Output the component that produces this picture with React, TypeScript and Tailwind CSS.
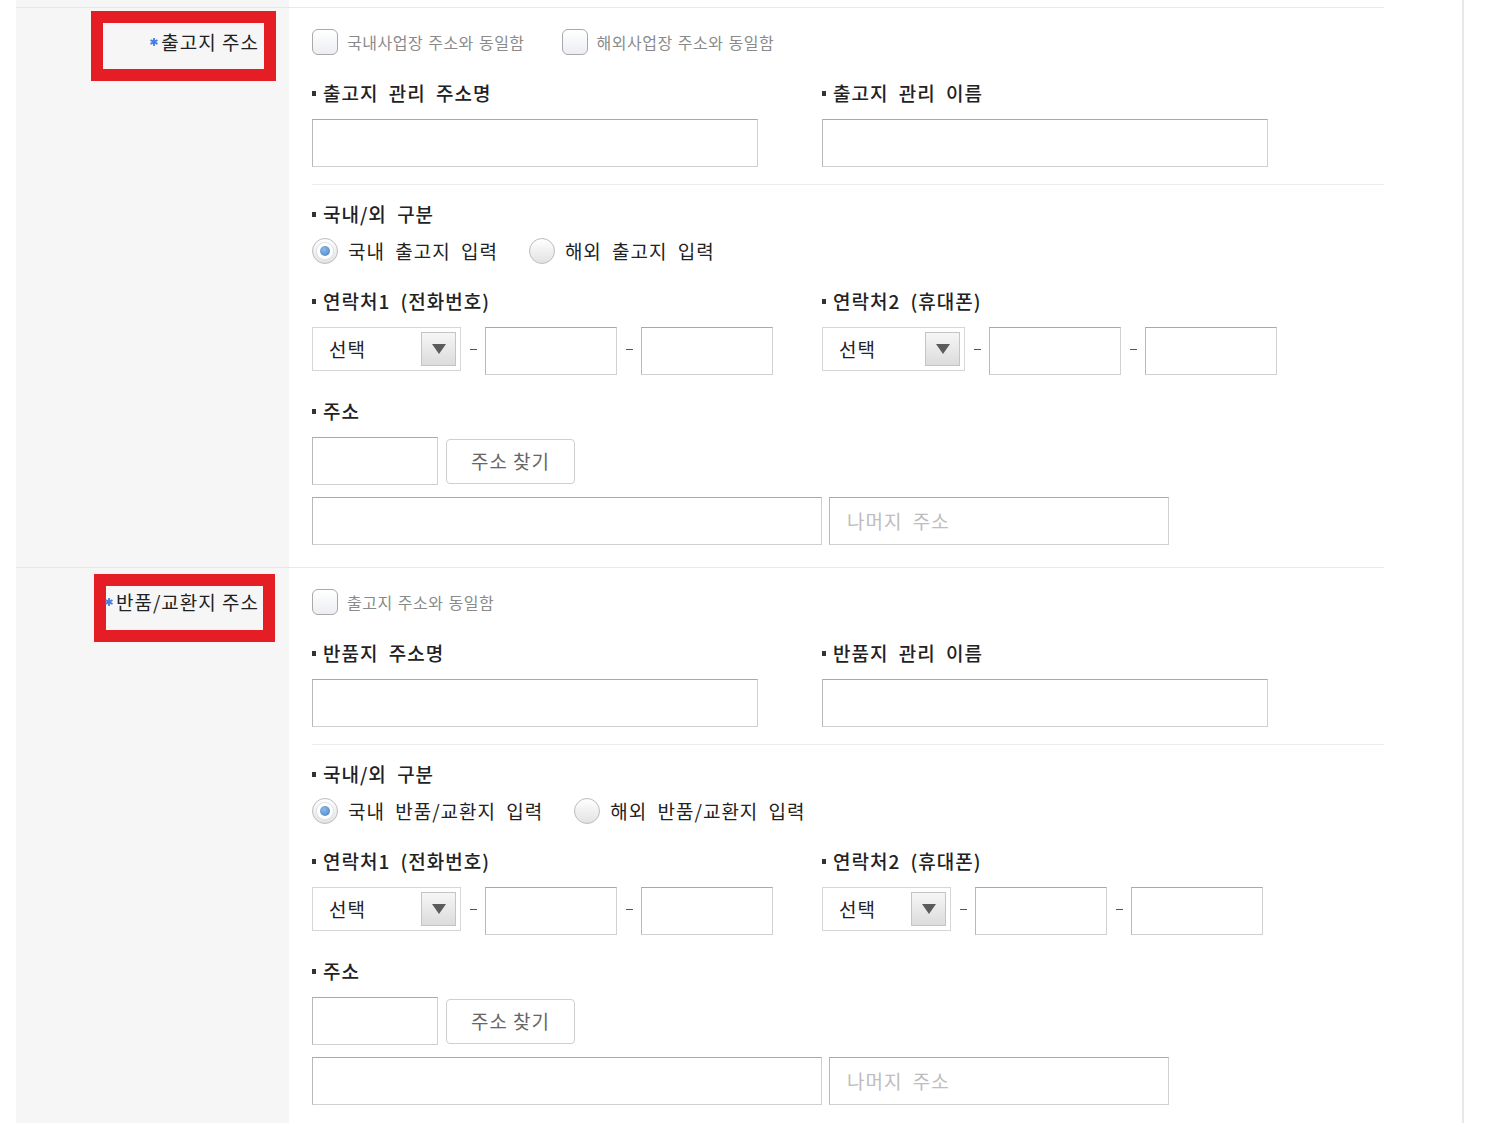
import React from "react";

const FONT = { fontFamily: '"Noto Sans CJK KR", "Noto Sans", sans-serif' };

function Star() {
  return (
    <svg width="8" height="8" viewBox="0 0 10 10" className="mr-[3px] shrink-0">
      <g stroke="#4a7fe0" strokeWidth="2.4" strokeLinecap="round">
        <line x1="5" y1="1" x2="5" y2="9" />
        <line x1="1.5" y1="3" x2="8.5" y2="7" />
        <line x1="1.5" y1="7" x2="8.5" y2="3" />
      </g>
    </svg>
  );
}

function Checkbox({ label }: { label: string }) {
  return (
    <label className="flex items-center h-[26px]">
      <span className="w-[26px] h-[26px] rounded-[6px] border border-[#a9a9a9] bg-gradient-to-b from-white to-[#eceef2]" />
      <span className="ml-[9px] text-[16px] leading-[20px] tracking-[0.5px] text-[#8a8a8a] [word-spacing:1px]">
        {label}
      </span>
    </label>
  );
}

function Radio({ label, checked }: { label: string; checked?: boolean }) {
  return (
    <label className="flex items-center h-[26px]">
      <span className="w-[26px] h-[26px] rounded-full border border-[#bdbdbd] bg-gradient-to-b from-white to-[#e2e2e2] flex items-center justify-center">
        {checked && (
          <span className="w-[16px] h-[16px] rounded-full bg-white flex items-center justify-center shadow-[0_0_0_1px_#d8e3ef]">
            <span className="w-[10px] h-[10px] rounded-full bg-[radial-gradient(circle_at_40%_35%,#8fbbe8,#3f7fc4)]" />
          </span>
        )}
      </span>
      <span className="ml-[10px] text-[19px] leading-[22px] tracking-[1px] text-[#222] [word-spacing:5px]">
        {label}
      </span>
    </label>
  );
}

function FieldLabel({ children }: { children: React.ReactNode }) {
  return (
    <div className="flex items-center h-[22px] -translate-y-[1px]">
      <span className="w-[4px] h-[5px] bg-[#333] mr-[7px] mt-[1px]" />
      <span className="text-[19px] leading-[22px] tracking-[1px] text-[#222] font-medium [word-spacing:5px]">
        {children}
      </span>
    </div>
  );
}

function TextBox({ className, placeholder }: { className: string; placeholder?: string }) {
  return (
    <div
      className={`h-[48px] border border-[#d0d0d0] border-t-[#a9a9a9] border-l-[#b9b9b9] bg-white flex items-center px-[17px] ${className}`}
    >
      {placeholder && (
        <span className="text-[19px] tracking-[1px] text-[#bdbdbd] [word-spacing:5px]">{placeholder}</span>
      )}
    </div>
  );
}

function SelectBox({ className }: { className: string }) {
  return (
    <div
      className={`h-[44px] border border-[#d6d6d6] bg-white flex items-center justify-between pl-[16px] pr-[4px] ${className}`}
    >
      <span className="text-[19px] tracking-[1px] text-[#222]">선택</span>
      <span className="w-[35px] h-[34px] border border-[#c4c4c4] bg-gradient-to-b from-[#f6f6f6] to-[#dcdcdc] flex items-center justify-center">
        <svg width="16" height="12" viewBox="0 0 16 12">
          <path d="M1 1 L15 1 L8 11 Z" fill="#5a5a5a" />
        </svg>
      </span>
    </div>
  );
}

function Dash() {
  return (
    <span className="w-[24px] h-[44px] flex items-center justify-center">
      <span className="w-[7px] h-[1px] bg-[#555]" />
    </span>
  );
}

function PhoneRow({ selectW }: { selectW: string }) {
  return (
    <div className="flex items-start">
      <SelectBox className={selectW} />
      <Dash />
      <TextBox className="w-[132px]" />
      <Dash />
      <TextBox className="w-[132px]" />
    </div>
  );
}

type SectionProps = {
  title: string;
  redBox: string;
  checks: string[];
  nameLabel: string;
  personLabel: string;
  radios: [string, string];
  select2: string;
  last?: boolean;
};

function Section(p: SectionProps) {
  return (
    <div className="flex border-t border-[#e9e9e9]">
      <div className="relative w-[273px] shrink-0 bg-[#f6f6f6]">
        <div className={`absolute border-[12px] border-[#e41e24] ${p.redBox}`} />
        <div className="relative mt-[23px] pr-[30px] flex items-center justify-end h-[22px]">
          <Star />
          <span className="text-[19px] leading-[22px] tracking-[1px] text-[#222]">{p.title}</span>
        </div>
      </div>
      <div className={`flex-1 pl-[23px] ${p.last ? "pb-[40px]" : "pb-[22px]"}`}>
        <div className="mt-[21px] flex gap-[37px]">
          {p.checks.map((c) => (
            <Checkbox key={c} label={c} />
          ))}
        </div>

        <div className="mt-[28px] flex">
          <div className="w-[510px]">
            <FieldLabel>{p.nameLabel}</FieldLabel>
            <TextBox className="mt-[14px] w-[446px]" />
          </div>
          <div>
            <FieldLabel>{p.personLabel}</FieldLabel>
            <TextBox className="mt-[14px] w-[446px]" />
          </div>
        </div>

        <div className="mt-[17px] border-t border-[#ececec]" />

        <div className="mt-[19px]">
          <FieldLabel>국내/외 구분</FieldLabel>
        </div>
        <div className="mt-[12px] flex gap-[31px]">
          <Radio label={p.radios[0]} checked />
          <Radio label={p.radios[1]} />
        </div>

        <div className="mt-[27px] flex">
          <div className="w-[510px]">
            <FieldLabel>연락처1 (전화번호)</FieldLabel>
            <div className="mt-[14px]">
              <PhoneRow selectW="w-[149px]" />
            </div>
          </div>
          <div>
            <FieldLabel>연락처2 (휴대폰)</FieldLabel>
            <div className="mt-[14px]">
              <PhoneRow selectW={p.select2} />
            </div>
          </div>
        </div>

        <div className="mt-[26px]">
          <FieldLabel>주소</FieldLabel>
        </div>
        <div className="mt-[14px] flex items-center gap-[8px]">
          <TextBox className="w-[126px]" />
          <button className="w-[129px] h-[45px] rounded-[4px] border border-[#cfcfcf] bg-white text-[19px] tracking-[1px] text-[#666]">
            주소 찾기
          </button>
        </div>
        <div className="mt-[12px] flex gap-[7px]">
          <TextBox className="w-[510px]" />
          <TextBox className="w-[340px]" placeholder="나머지 주소" />
        </div>
      </div>
    </div>
  );
}

export default function App() {
  return (
    <div className="h-[1123px] overflow-hidden bg-white flex" style={FONT}>
      <div className="w-[16px] shrink-0" />
      <div className="w-[1368px] shrink-0">
        <div className="h-[7px] flex">
          <div className="w-[273px] bg-[#f6f6f6]" />
        </div>
        <Section
          title="출고지 주소"
          redBox="left-[75px] top-[3px] w-[185px] h-[70px]"
          checks={["국내사업장 주소와 동일함", "해외사업장 주소와 동일함"]}
          nameLabel="출고지 관리 주소명"
          personLabel="출고지 관리 이름"
          radios={["국내 출고지 입력", "해외 출고지 입력"]}
          select2="w-[143px]"
        />
        <Section
          title="반품/교환지 주소"
          redBox="left-[78px] top-[6px] w-[181px] h-[68px]"
          checks={["출고지 주소와 동일함"]}
          nameLabel="반품지 주소명"
          personLabel="반품지 관리 이름"
          radios={["국내 반품/교환지 입력", "해외 반품/교환지 입력"]}
          select2="w-[129px]"
          last
        />
      </div>
      <div className="w-[78px] shrink-0" />
      <div className="w-[2px] shrink-0 bg-[#e8e8e8]" />
    </div>
  );
}
